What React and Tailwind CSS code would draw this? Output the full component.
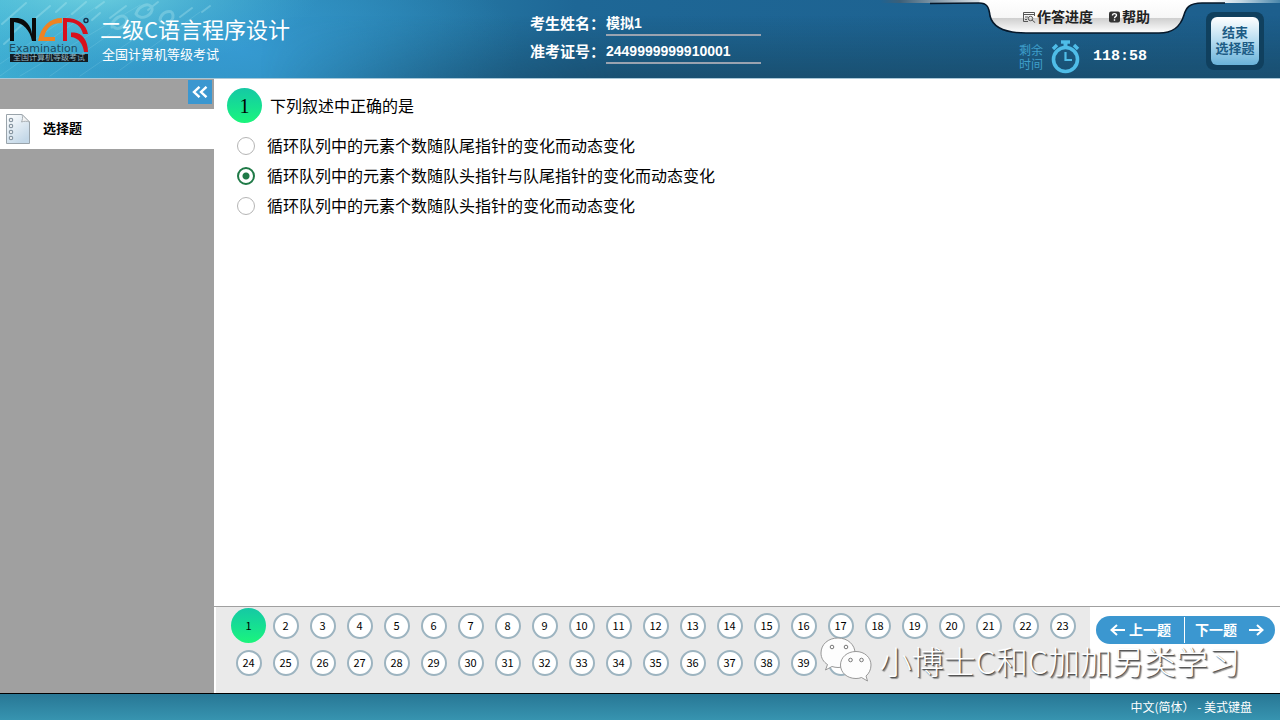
import { useState } from 'react';

const OPTIONS = [
  '循环队列中的元素个数随队尾指针的变化而动态变化',
  '循环队列中的元素个数随队头指针与队尾指针的变化而动态变化',
  '循环队列中的元素个数随队头指针的变化而动态变化',
];

const QUESTIONS = Array.from({ length: 40 }, (_, i) => i + 1);

export default function App() {
  const [current, setCurrent] = useState(1);
  const [answer, setAnswer] = useState(1);

  return (
    <div className="flex min-h-screen flex-col bg-white font-['Liberation_Sans','Noto_Sans_CJK_SC',sans-serif] text-black">
      <Header />
      <div className="flex flex-1">
        <Sidebar />
        <main className="flex min-w-0 flex-1 flex-col">
          <Question number={current} answer={answer} onAnswer={setAnswer} />
          <BottomBar current={current} onSelect={setCurrent} />
        </main>
      </div>
      <footer className="flex h-[27px] items-center justify-end border-t border-black bg-linear-to-b from-[#287795] to-[#3794b0] pr-7 font-['Noto_Sans_CJK_SC',sans-serif] text-xs text-white">
        中文(简体） - 美式键盘
      </footer>
    </div>
  );
}

function Header() {
  return (
    <header className="relative flex h-[79px] overflow-hidden border-b border-[#a9c8d8] bg-linear-to-r from-[#3fb0d2] via-[#1e6796] via-45% to-[#1d5f8d]">
      <HeaderArt />
      <div className="relative flex w-[530px] shrink-0 gap-2.5 pt-4 pl-2">
        <Logo />
        <div className="font-['Noto_Sans_CJK_SC',sans-serif] text-white">
          <h1 className="text-[22px] leading-6">二级C语言程序设计</h1>
          <p className="pt-0.5 pl-0.5 text-[13px] leading-6">全国计算机等级考试</p>
        </div>
      </div>
      <dl className="relative grid grid-cols-[76px_155px] content-start items-start gap-y-1 pt-3 text-white">
        <dt className="text-[15px] leading-6 font-bold">考生姓名：</dt>
        <dd className="border-b-2 border-[#9aa3b0] text-sm leading-[22px] font-bold">模拟1</dd>
        <dt className="text-[15px] leading-6 font-bold">准考证号：</dt>
        <dd className="border-b-2 border-[#9aa3b0] text-sm leading-[22px] font-bold">2449999999910001</dd>
      </dl>
      <div className="relative ml-auto flex gap-4 pr-4">
        <div className="flex w-[204px] flex-col">
          <nav className="flex h-[34px] items-center gap-4 pl-9 text-sm font-bold text-[#222]">
            <button className="flex items-center gap-px">
              <ProgressIcon />
              作答进度
            </button>
            <button className="flex items-center gap-0.5">
              <HelpIcon />
              帮助
            </button>
          </nav>
          <div className="flex items-center gap-2 pt-1.5 pl-[33px]">
            <span className="w-6 font-['Noto_Sans_CJK_SC',sans-serif] text-xs leading-[14px] text-[#3f9fcb]">剩余时间</span>
            <Stopwatch />
            <span className="pl-1 font-['Liberation_Mono',monospace] text-[15px] font-bold text-white">118:58</span>
          </div>
        </div>
        <div className="mt-3 h-[58px] rounded-lg bg-[#10405e] p-[5px]">
          <button className="h-12 w-12 rounded-md bg-linear-to-b from-white via-[#b5dcf0] to-[#69b3da] text-[13px] leading-4 font-bold text-[#1d5c85]">
            结束
            <br />
            选择题
          </button>
        </div>
      </div>
    </header>
  );
}

// soft light streaks on the left, white tab plate on the right
function HeaderArt() {
  return (
    <>
      <svg className="absolute inset-0 h-full w-full" viewBox="0 0 1280 78" preserveAspectRatio="none" aria-hidden="true">
        <defs>
          <radialGradient id="glow" gradientUnits="userSpaceOnUse" cx="0" cy="0" r="1" gradientTransform="translate(90 -10) scale(230 80)">
            <stop offset="0" stopColor="#7fdfe6" stopOpacity="0.8" />
            <stop offset="1" stopColor="#4cc0dc" stopOpacity="0" />
          </radialGradient>
          <radialGradient id="blue" gradientUnits="userSpaceOnUse" cx="0" cy="0" r="1" gradientTransform="translate(240 50) scale(280 120)">
            <stop offset="0" stopColor="#369bd4" stopOpacity="0.9" />
            <stop offset="1" stopColor="#2f92cc" stopOpacity="0" />
          </radialGradient>
          <linearGradient id="shade" x1="0" y1="0" x2="0" y2="1">
            <stop offset="0.2" stopColor="#184b69" stopOpacity="0" />
            <stop offset="1" stopColor="#184b69" stopOpacity="0.8" />
          </linearGradient>
          <linearGradient id="fade" x1="0" y1="0" x2="1" y2="0">
            <stop offset="0" stopColor="#fff" stopOpacity="0" />
            <stop offset="0.35" stopColor="#fff" />
          </linearGradient>
          <mask id="rightOnly">
            <rect x="260" width="1020" height="78" fill="url(#fade)" />
          </mask>
        </defs>
        <rect width="1280" height="78" fill="url(#blue)" />
        <rect width="1280" height="78" fill="url(#glow)" />
        <rect width="1280" height="78" fill="url(#shade)" mask="url(#rightOnly)" />
        <g stroke="#c8f4f5" strokeLinecap="round" fill="none" opacity="0.28">
          <path strokeWidth="2" d="M2 24 26 3M14 32l10-9M36 18 50 6M56 12 66 3M72 14l14-12M92 20l8-7M4 44l8-7M96 8l8-6M110 18l16-12M148 10l10-8M180 17l12-9M202 12l8-6" />
          <path strokeWidth="3" d="M112 27c0-8 10-14 14-9s-8 14-12 9M136 14c3-9 14-12 16-6s-11 14-16 6M160 20c1-8 12-12 13-5s-10 12-13 5" />
          <path strokeWidth="1" d="M0 64 70 15M0 76 100 4M20 76 140 5M50 76 110 34M80 76 150 28M120 70 200 12" opacity="0.5" />
        </g>
      </svg>
      <svg className="absolute top-0 right-0" width="400" height="36" viewBox="0 0 400 36" aria-hidden="true">
        <defs>
          <linearGradient id="plate" x1="0" y1="0" x2="0" y2="33" gradientUnits="userSpaceOnUse">
            <stop offset="0" stopColor="#fff" />
            <stop offset="0.53" stopColor="#f7f7f7" />
            <stop offset="0.55" stopColor="#cfcfcf" />
            <stop offset="1" stopColor="#fff" />
          </linearGradient>
          <linearGradient id="strip" x1="0" y1="0" x2="400" y2="0" gradientUnits="userSpaceOnUse">
            <stop offset="0" stopColor="#1d6393" />
            <stop offset="0.05" stopColor="#3c5f78" />
            <stop offset="0.22" stopColor="#c3ced6" />
            <stop offset="0.3" stopColor="#fff" />
            <stop offset="0.83" stopColor="#fff" />
            <stop offset="0.9" stopColor="#c5d8e3" />
            <stop offset="1" stopColor="#4a86aa" />
          </linearGradient>
        </defs>
        <path fill="url(#strip)" d="M0 0H400V3H0z" />
        <path fill="url(#plate)" d="M100 0H330V3H322C309 3 306 8 304 15C300 28 292 33 279 33H146C126 33 113 28 110 16C109 7 107 3 99 3z" />
        <path fill="none" stroke="#06182a" strokeWidth="1.6" d="M50 3.500 99 3C107 3 109 7 110 16C113 28 126 33 146 33H279C292 33 300 28 304 15C306 8 309 3 322 3H345" />
      </svg>
    </>
  );
}

function Logo() {
  return (
    <div className="flex w-[82px] flex-col items-center">
      <svg className="mt-0.5 overflow-visible" width="82" height="26" viewBox="0 0 82 26" aria-label="NCR" role="img">
        <path d="M2 0H10C18 1 23 8 24 16V0H28V23H24C22 12 15 5 6 4V23H2z" fill="#0a0a0a" />
        <path d="M54 0C42 0 33 8 30 23H47V19H36C39 9 44 5 54 5z" fill="#ee8322" />
        <path d="M59 4V23H55V0C68-1 78 5 80 16H75C73 8 68 4 59 4z" fill="#d8101c" />
        <path d="M63 14.500H66C74 15 80 22 80 34H76C75 26 71 20 63 19z" fill="#d8101c" />
        <circle cx="78" cy="2.500" r="2" fill="none" stroke="#152f4a" strokeWidth="1.400" />
      </svg>
      <span className="w-full pl-px font-['DejaVu_Sans',sans-serif] text-[11px] leading-[9px] text-[#1d4a5e]">Examination</span>
      <span className="mt-px flex h-2 w-[78px] items-center justify-center bg-[#121b22] text-[8px] leading-[8px] text-[#8fb4c0]">
        全国计算机等级考试
      </span>
    </div>
  );
}

function ProgressIcon() {
  return (
    <svg width="14" height="12" viewBox="0 0 14 12" fill="none" stroke="#555" aria-hidden="true">
      <path d="M12.500 5V1.500h-11v9H6M1.500 3.500h11M3 6h3M3 8.500h2" />
      <circle cx="8.500" cy="7.500" r="2.200" />
      <path d="m10.200 9.200 3 2.500" />
    </svg>
  );
}

function HelpIcon() {
  return (
    <svg width="11" height="12" viewBox="0 0 11 12" aria-hidden="true">
      <rect y="0.500" width="11" height="11" rx="2" fill="#333" />
      <path d="M3.500 4.500C3.500 2 7.500 2 7.500 4.300 7.500 5.700 5.500 5.500 5.500 7.200M5.500 8.300v1.400" fill="none" stroke="#fff" strokeWidth="1.400" />
    </svg>
  );
}

function Stopwatch() {
  return (
    <svg width="30" height="34" viewBox="0 0 30 34" fill="none" stroke="#4fbde8" aria-hidden="true">
      <circle cx="14.500" cy="19.500" r="12" strokeWidth="3.600" />
      <path d="M10 2h9" strokeWidth="3.400" />
      <path d="M14.500 2v6" strokeWidth="4" />
      <path d="m2 9 4-4M27 9l-4-4" strokeWidth="3.400" />
      <path d="M14.500 12v8H21" strokeWidth="2.200" />
    </svg>
  );
}

function Sidebar() {
  return (
    <aside className="w-[214px] shrink-0 bg-[#a0a0a0]">
      <div className="flex h-[30px] justify-end pt-px pr-0.5">
        <button className="flex h-6 w-6 items-center justify-center bg-[#3b97d0]" aria-label="收起">
          <svg width="16" height="12" viewBox="0 0 16 12" fill="none" stroke="#fff" strokeWidth="2.400">
            <path d="M7.500 0.800 2 6l5.500 5.200M14.500 0.800 9 6l5.500 5.200" />
          </svg>
        </button>
      </div>
      <a href="#choice" className="flex h-10 items-center gap-3 bg-white pl-[5px] text-[13px] font-bold">
        <svg width="26" height="30" viewBox="0 0 26 30" aria-hidden="true">
          <defs>
            <linearGradient id="sheet" x1="0" y1="0" x2="0.600" y2="1">
              <stop offset="0" stopColor="#fff" />
              <stop offset="1" stopColor="#c4d8e8" />
            </linearGradient>
          </defs>
          <path d="M1.500.500H17L24.500 8v21.500h-23z" fill="url(#sheet)" stroke="#9aa4ab" />
          <path d="M17 .500c1 3 .5 5-.5 7.500 3-1 5-1 8 0z" fill="#f4f4f4" stroke="#a8afb4" />
          <g fill="#fff" stroke="#8796a2" strokeWidth="1.200">
            <circle cx="6" cy="6" r="1.700" />
            <circle cx="6" cy="12" r="1.700" />
            <circle cx="6" cy="18" r="1.700" />
            <circle cx="6" cy="24" r="1.700" />
          </g>
        </svg>
        选择题
      </a>
    </aside>
  );
}

function Question({ number, answer, onAnswer }) {
  return (
    <section className="flex-1 pt-[9px] pl-[13px] font-['Noto_Sans_CJK_SC',sans-serif]">
      <div className="flex items-center gap-2">
        <span className="flex h-[35px] w-[35px] items-center justify-center rounded-full bg-linear-to-b from-[#16c8a4] to-[#1bf57b] font-['Liberation_Serif',serif] text-xl">
          {number}
        </span>
        <h2 className="pb-0.5 text-base">下列叙述中正确的是</h2>
      </div>
      <div className="flex flex-col pt-2 pl-2.5">
        {OPTIONS.map((text, i) => (
          <label key={i} className="flex h-[30px] items-center gap-3 text-base">
            <input
              type="radio"
              name="answer"
              checked={answer === i}
              onChange={() => onAnswer(i)}
              className="h-[18px] w-[18px] appearance-none rounded-full border border-[#b5b5b5] bg-white checked:border-2 checked:border-[#1f7a47] checked:bg-[radial-gradient(circle,#1f7a47_3px,#ffffff_4px)]"
            />
            <span className="pb-0.5">{text}</span>
          </label>
        ))}
      </div>
    </section>
  );
}

function BottomBar({ current, onSelect }) {
  return (
    <div className="relative flex h-[87px] border-t border-[#a0a0a0]">
      <div className="flex-1 border-l-2 border-white bg-[#eaeaea] pl-3.5">
        <div className="flex flex-wrap">
          {QUESTIONS.map((n) => (
            <div key={n} className="flex h-[37px] w-[37px] items-center justify-center">
              <button
                onClick={() => onSelect(n)}
                className={
                  n === current
                    ? "h-[35px] w-[35px] rounded-full bg-linear-to-b from-[#16c8a4] to-[#1bf57b] font-['Noto_Sans_CJK_SC',sans-serif] text-[11px]"
                    : "h-[26px] w-[26px] rounded-full border-2 border-[#9db4c0] bg-white font-['Noto_Sans_CJK_SC',sans-serif] text-[11px]"
                }
              >
                {n}
              </button>
            </div>
          ))}
        </div>
      </div>
      <div className="w-[190px] shrink-0 pt-[9px] pl-1.5">
        <div className="flex h-7 w-[179px] items-center rounded-full bg-[#3b97d0] text-sm font-bold text-white">
          <button
            className="flex h-[26px] w-[89px] items-center gap-1 border-r border-white pl-3.5"
            onClick={() => onSelect(Math.max(1, current - 1))}
          >
            <svg width="15" height="12" viewBox="0 0 15 12" fill="none" stroke="#fff" strokeWidth="2">
              <path d="M7 1 1.500 6 7 11M1.500 6H15" />
            </svg>
            上一题
          </button>
          <button
            className="flex h-[26px] flex-1 items-center gap-3 pl-2.5"
            onClick={() => onSelect(Math.min(QUESTIONS.length, current + 1))}
          >
            下一题
            <svg width="15" height="12" viewBox="0 0 15 12" fill="none" stroke="#fff" strokeWidth="2">
              <path d="m8 1 5.500 5L8 11M13.500 6H0" />
            </svg>
          </button>
        </div>
      </div>
      <Watermark />
    </div>
  );
}

function Watermark() {
  return (
    <div className="pointer-events-none absolute right-10 bottom-2.5 flex items-center gap-2">
      <svg width="52" height="46" viewBox="0 0 52 46" aria-hidden="true">
        <g fill="#fdfdfd" stroke="#8d8d8d" strokeWidth="0.900">
          <path d="M18 1C8 1 1 7.500 1 16c0 5 2.500 9 6.500 11.500L5.500 33l6.500-3.500c2 .6 4 1 6 1 10 0 17-6.500 17-14.500S28 1 18 1z" />
          <path d="M36 14.500c-9 0-15.500 6-15.500 13.500S27 41.500 36 41.500c2 0 4-.3 5.500-1l6 3.500-1.500-5c3-2.500 5-6.500 5-11 0-7.500-6.500-13.500-15-13.500z" />
        </g>
        <g fill="none" stroke="#777" strokeWidth="1">
          <circle cx="12" cy="10" r="1.800" />
          <circle cx="26" cy="10" r="1.800" />
          <circle cx="30.500" cy="23" r="1.800" />
          <circle cx="41.500" cy="23" r="1.800" />
        </g>
      </svg>
      <span className="font-['Noto_Sans_CJK_SC',sans-serif] text-[32px] leading-10 font-light whitespace-nowrap text-white [text-shadow:1px_1px_1px_#444,2px_2px_1px_#999]">
        小博士C和C加加另类学习
      </span>
    </div>
  );
}
